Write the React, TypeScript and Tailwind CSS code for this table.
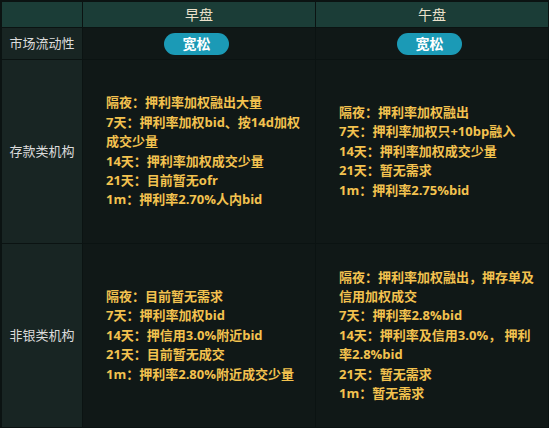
import React from "react";

const rows = [
  {
    label: "存款类机构",
    am: [
      "隔夜：押利率加权融出大量",
      "7天：押利率加权bid、按14d加权",
      "成交少量",
      "14天：押利率加权成交少量",
      "21天：目前暂无ofr",
      "1m：押利率2.70%人内bid",
    ],
    pm: [
      "隔夜：押利率加权融出",
      "7天：押利率加权只+10bp融入",
      "14天：押利率加权成交少量",
      "21天：暂无需求",
      "1m：押利率2.75%bid",
    ],
  },
  {
    label: "非银类机构",
    am: [
      "隔夜：目前暂无需求",
      "7天：押利率加权bid",
      "14天：押信用3.0%附近bid",
      "21天：目前暂无成交",
      "1m：押利率2.80%附近成交少量",
    ],
    pm: [
      "隔夜：押利率加权融出，押存单及",
      "信用加权成交",
      "7天：押利率2.8%bid",
      "14天：押利率及信用3.0%， 押利",
      "率2.8%bid",
      "21天：暂无需求",
      "1m：暂无需求",
    ],
  },
];

function Lines({ items }: { items: string[] }) {
  return (
    <div className="bg-[#101817] flex flex-col justify-center pl-[23px] text-[13px] leading-[19.4px] font-bold text-[#f3c24f] whitespace-pre overflow-hidden">
      {items.map((t, i) => (
        <div key={i}>{t}</div>
      ))}
    </div>
  );
}

function Pill() {
  return (
    <div className="bg-[#101817] flex items-center justify-center">
      <span className="w-[65px] h-[22px] rounded-full bg-[#1b9ab6] text-white font-bold text-[14px] flex items-center justify-center -ml-[5px]">
        宽松
      </span>
    </div>
  );
}

export default function App() {
  return (
    <div
      className="w-[549px] h-[428px] bg-[#0b1312] pl-[2px] pt-[2px] pr-[1px] pb-[1px]"
      style={{ fontFamily: '"Open Sans", "Noto Sans CJK SC", "Noto Sans", sans-serif' }}
    >
      <div className="grid h-full grid-cols-[80px_1fr_1fr] grid-rows-[25px_31px_1fr_1fr] gap-px">
        <div className="bg-[#1b3d37]" />
        <div className="bg-[#1b3d37] flex items-center justify-center text-[14px] text-[#ebe2cc]">早盘</div>
        <div className="bg-[#1b3d37] flex items-center justify-center text-[14px] text-[#ebe2cc]">午盘</div>

        <div className="bg-[#182523] flex items-center justify-center text-[13px] text-[#dcdcdc]">市场流动性</div>
        <Pill />
        <Pill />

        {rows.map((r) => (
          <React.Fragment key={r.label}>
            <div className="bg-[#182523] flex items-center justify-center text-[13px] text-[#dcdcdc]">{r.label}</div>
            <Lines items={r.am} />
            <Lines items={r.pm} />
          </React.Fragment>
        ))}
      </div>
    </div>
  );
}
